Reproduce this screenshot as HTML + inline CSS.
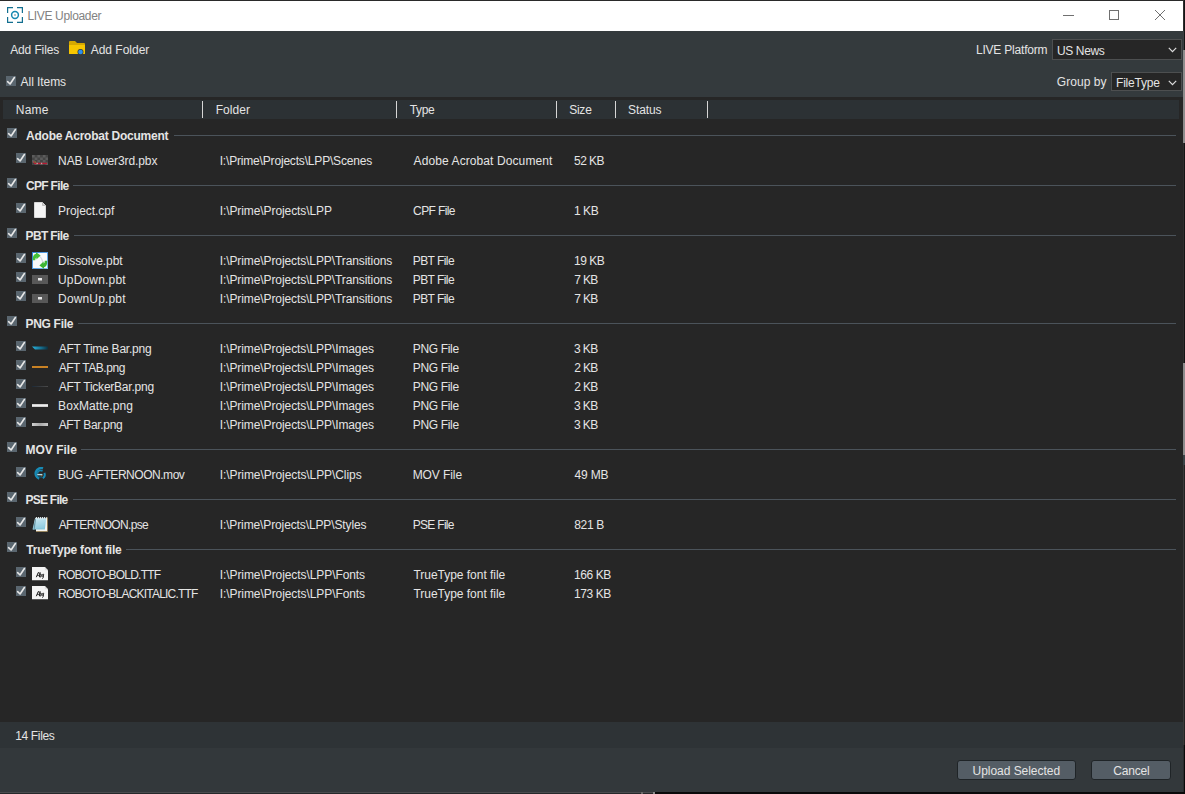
<!DOCTYPE html>
<html><head><meta charset="utf-8"><style>
html,body{margin:0;padding:0;width:1185px;height:794px;overflow:hidden;background:#262626;}
body{position:relative;font-family:"Liberation Sans", sans-serif;color:#e4e4e4;font-size:12px;}
.t{position:absolute;white-space:nowrap;line-height:14px;}
.r{position:absolute;}
.cb{position:absolute;width:10px;height:10px;background:#5a666f;}
.cb svg{position:absolute;left:0;top:0;}
</style></head><body>
<div class="r" style="left:0px;top:0px;width:1185px;height:1px;background:#2a2a2a;"></div>
<div class="r" style="left:0px;top:1px;width:1183px;height:30px;background:#ffffff;"></div>
<svg class="r" style="left:7px;top:7px" width="16" height="16" viewBox="0 0 16 16"><path d="M0.6 6 V0.6 H6 M10 0.6 H15.4 V6 M15.4 10 V15.4 H10 M6 15.4 H0.6 V10" fill="none" stroke="#136f90" stroke-width="1.2"/><circle cx="8" cy="8" r="3.4" fill="none" stroke="#1688b0" stroke-width="1.5"/><rect x="7.3" y="7.3" width="1.4" height="1.4" fill="#5d8d9c"/></svg>
<div id="t0" class="t" style="left:27.43px;top:9px;color:#828282;letter-spacing:-0.330px;">LIVE Uploader</div>
<div class="r" style="left:1063px;top:15px;width:11px;height:1px;background:#707070;"></div>
<div class="r" style="left:1109px;top:10px;width:8px;height:8px;border:1px solid #707070"></div>
<svg class="r" style="left:1154px;top:9px" width="12" height="12" viewBox="0 0 12 12"><path d="M1 1 L11 11 M11 1 L1 11" stroke="#707070" stroke-width="1"/></svg>
<div class="r" style="left:0px;top:31px;width:1183px;height:66px;background:#343a3d;"></div>
<div id="t1" class="t" style="left:10.19px;top:43px;letter-spacing:-0.123px;">Add Files</div>
<svg class="r" style="left:69px;top:41px" width="17" height="15" viewBox="0 0 17 15"><path d="M0 1 Q0 0 1 0 H6 L8 2 H15 Q16 2 16 3 V5 H0 Z" fill="#d6a800"/><path d="M0 4 H16 V12.5 Q16 13 15.5 13 H0.5 Q0 13 0 12.5 Z" fill="#f7c600"/><circle cx="11.5" cy="11" r="3" fill="#343a3d"/><circle cx="11.5" cy="11" r="2.3" fill="#2c8ff0"/></svg>
<div id="t2" class="t" style="left:90.63px;top:43px;letter-spacing:-0.000px;">Add Folder</div>
<div id="t3" class="t" style="left:975.91px;top:43px;letter-spacing:-0.195px;">LIVE Platform</div>
<div class="r" style="left:1052px;top:39px;width:130px;height:21px;background:#262626;box-sizing:border-box;border:1px solid #4d4f50;"></div>
<div id="t4" class="t" style="left:1057.03px;top:44px;letter-spacing:-0.382px;">US News</div>
<svg class="r" style="left:1168px;top:47px" width="9" height="6" viewBox="0 0 9 6"><path d="M0.8 0.8 L4.5 4.6 L8.2 0.8" fill="none" stroke="#dddddd" stroke-width="1.2"/></svg>
<div class="cb" style="left:6px;top:76px"><svg width="10" height="10" viewBox="0 0 10 10"><path d="M1.6 5.7 L4.1 8.0 L8.4 1.5" fill="none" stroke="#e8e8e8" stroke-width="1.6" stroke-linecap="round" stroke-linejoin="round"/></svg></div>
<div id="t5" class="t" style="left:20.59px;top:75px;letter-spacing:-0.059px;">All Items</div>
<div id="t6" class="t" style="left:1056.79px;top:75px;letter-spacing:0.056px;">Group by</div>
<div class="r" style="left:1111px;top:72px;width:71px;height:19px;background:#262626;box-sizing:border-box;border:1px solid #4d4f50;"></div>
<div id="t7" class="t" style="left:1116.07px;top:76px;letter-spacing:-0.230px;">FileType</div>
<svg class="r" style="left:1168px;top:80px" width="9" height="6" viewBox="0 0 9 6"><path d="M0.8 0.8 L4.5 4.6 L8.2 0.8" fill="none" stroke="#dddddd" stroke-width="1.2"/></svg>
<div class="r" style="left:0px;top:97px;width:1183px;height:3px;background:#262626;"></div>
<div class="r" style="left:0px;top:100px;width:1183px;height:622px;background:#262626;"></div>
<div class="r" style="left:3px;top:100px;width:1176px;height:19px;background:#2c3134;"></div>
<div class="r" style="left:202px;top:101px;width:1px;height:17px;background:#d6d6d6;"></div>
<div class="r" style="left:396px;top:101px;width:1px;height:17px;background:#d6d6d6;"></div>
<div class="r" style="left:556px;top:101px;width:1px;height:17px;background:#d6d6d6;"></div>
<div class="r" style="left:615px;top:101px;width:1px;height:17px;background:#d6d6d6;"></div>
<div class="r" style="left:707px;top:101px;width:1px;height:17px;background:#d6d6d6;"></div>
<div id="t8" class="t" style="left:15.73px;top:103px;letter-spacing:0.254px;">Name</div>
<div id="t9" class="t" style="left:215.74px;top:103px;letter-spacing:0.056px;">Folder</div>
<div id="t10" class="t" style="left:409.75px;top:103px;letter-spacing:-0.325px;">Type</div>
<div id="t11" class="t" style="left:569.19px;top:103px;letter-spacing:-0.244px;">Size</div>
<div id="t12" class="t" style="left:628.00px;top:103px;letter-spacing:-0.093px;">Status</div>
<div class="cb" style="left:7px;top:128px"><svg width="10" height="10" viewBox="0 0 10 10"><path d="M1.6 5.7 L4.1 8.0 L8.4 1.5" fill="none" stroke="#e8e8e8" stroke-width="1.6" stroke-linecap="round" stroke-linejoin="round"/></svg></div>
<div id="t13" class="t" style="left:26.04px;top:129px;font-weight:700;letter-spacing:-0.243px;">Adobe Acrobat Document</div>
<div class="r" style="left:174px;top:135px;width:1002px;height:1px;background:#4b535a;"></div>
<div class="cb" style="left:16px;top:153px"><svg width="10" height="10" viewBox="0 0 10 10"><path d="M1.6 5.7 L4.1 8.0 L8.4 1.5" fill="none" stroke="#e8e8e8" stroke-width="1.6" stroke-linecap="round" stroke-linejoin="round"/></svg></div>
<svg class="r" style="left:32px;top:155px" width="16" height="10" viewBox="0 0 16 10"><rect width="16" height="10" fill="#444"/><rect x="0.00" y="0.00" width="2.7" height="2.5" fill="#5c5c5c"/><rect x="5.40" y="0.00" width="2.7" height="2.5" fill="#5c5c5c"/><rect x="10.80" y="0.00" width="2.7" height="2.5" fill="#5c5c5c"/><rect x="2.70" y="2.50" width="2.7" height="2.5" fill="#5c5c5c"/><rect x="8.10" y="2.50" width="2.7" height="2.5" fill="#5c5c5c"/><rect x="13.50" y="2.50" width="2.7" height="2.5" fill="#5c5c5c"/><rect x="0.00" y="5.00" width="2.7" height="2.5" fill="#5c5c5c"/><rect x="5.40" y="5.00" width="2.7" height="2.5" fill="#5c5c5c"/><rect x="10.80" y="5.00" width="2.7" height="2.5" fill="#5c5c5c"/><rect x="2.70" y="7.50" width="2.7" height="2.5" fill="#5c5c5c"/><rect x="8.10" y="7.50" width="2.7" height="2.5" fill="#5c5c5c"/><rect x="13.50" y="7.50" width="2.7" height="2.5" fill="#5c5c5c"/><rect x="2" y="7.8" width="13" height="1.3" fill="#b81a32"/><rect x="4.5" y="7.8" width="1.3" height="1.3" fill="#c8a8a8"/><rect x="9" y="7.8" width="1.2" height="1.3" fill="#c0a0a0"/><rect x="1" y="6.5" width="1.2" height="1.2" fill="#c83040"/><rect x="2.5" y="6.5" width="1.5" height="1" fill="#a08020"/></svg>
<div id="t14" class="t" style="left:58.07px;top:154px;letter-spacing:-0.089px;">NAB Lower3rd.pbx</div>
<div id="t15" class="t" style="left:219.73px;top:154px;letter-spacing:-0.181px;">I:\Prime\Projects\LPP\Scenes</div>
<div id="t16" class="t" style="left:413.59px;top:154px;letter-spacing:0.096px;">Adobe Acrobat Document</div>
<div id="t17" class="t" style="left:574.06px;top:154px;letter-spacing:-0.561px;">52 KB</div>
<div class="cb" style="left:7px;top:178px"><svg width="10" height="10" viewBox="0 0 10 10"><path d="M1.6 5.7 L4.1 8.0 L8.4 1.5" fill="none" stroke="#e8e8e8" stroke-width="1.6" stroke-linecap="round" stroke-linejoin="round"/></svg></div>
<div id="t18" class="t" style="left:26.00px;top:179px;font-weight:700;letter-spacing:-0.682px;">CPF File</div>
<div class="r" style="left:73px;top:185px;width:1103px;height:1px;background:#4b535a;"></div>
<div class="cb" style="left:16px;top:203px"><svg width="10" height="10" viewBox="0 0 10 10"><path d="M1.6 5.7 L4.1 8.0 L8.4 1.5" fill="none" stroke="#e8e8e8" stroke-width="1.6" stroke-linecap="round" stroke-linejoin="round"/></svg></div>
<svg class="r" style="left:34px;top:202px" width="12" height="16" viewBox="0 0 12 16"><path d="M0.5 0.5 H8.5 L11.5 3.5 V15.5 H0.5 Z" fill="#f4f4f4" stroke="#d8d8d8" stroke-width="1"/><path d="M8.5 0.5 V3.5 H11.5" fill="#cfcfcf" stroke="#bbbbbb" stroke-width="1"/></svg>
<div id="t19" class="t" style="left:58.07px;top:204px;letter-spacing:-0.050px;">Project.cpf</div>
<div id="t20" class="t" style="left:219.73px;top:204px;letter-spacing:-0.091px;">I:\Prime\Projects\LPP</div>
<div id="t21" class="t" style="left:413.12px;top:204px;letter-spacing:-0.612px;">CPF File</div>
<div id="t22" class="t" style="left:573.93px;top:204px;letter-spacing:-0.430px;">1 KB</div>
<div class="cb" style="left:7px;top:228px"><svg width="10" height="10" viewBox="0 0 10 10"><path d="M1.6 5.7 L4.1 8.0 L8.4 1.5" fill="none" stroke="#e8e8e8" stroke-width="1.6" stroke-linecap="round" stroke-linejoin="round"/></svg></div>
<div id="t23" class="t" style="left:25.53px;top:229px;font-weight:700;letter-spacing:-0.632px;">PBT File</div>
<div class="r" style="left:74px;top:235px;width:1102px;height:1px;background:#4b535a;"></div>
<div class="cb" style="left:16px;top:253px"><svg width="10" height="10" viewBox="0 0 10 10"><path d="M1.6 5.7 L4.1 8.0 L8.4 1.5" fill="none" stroke="#e8e8e8" stroke-width="1.6" stroke-linecap="round" stroke-linejoin="round"/></svg></div>
<svg class="r" style="left:32px;top:252px" width="16" height="17" viewBox="0 0 16 17"><defs><linearGradient id="db" x1="0" y1="0" x2="1" y2="1"><stop offset="0" stop-color="#2f7fd6"/><stop offset="1" stop-color="#7fc0f0"/></linearGradient></defs><rect x="0" y="0" width="16" height="17" fill="url(#db)"/><rect x="1" y="1" width="14" height="15" fill="#f8fafc"/><path d="M5.5 3 Q10 5 11 11" fill="none" stroke="#d4d8e0" stroke-width="1.2"/><path d="M0.8 8.2 Q0.4 2.6 4 1.8 L3.8 0 L8.6 3.4 L4.4 7.6 L4.4 5.4 Q3.2 5.8 3.2 8.2 Z" fill="#44c238"/><path d="M15.2 8.8 Q15.6 14.4 12 15.2 L12.2 17 L7.4 13.6 L11.6 9.4 L11.6 11.6 Q12.8 11.2 12.8 8.8 Z" fill="#3db534"/></svg>
<div id="t24" class="t" style="left:58.07px;top:254px;letter-spacing:-0.070px;">Dissolve.pbt</div>
<div id="t25" class="t" style="left:219.73px;top:254px;letter-spacing:-0.095px;">I:\Prime\Projects\LPP\Transitions</div>
<div id="t26" class="t" style="left:412.71px;top:254px;letter-spacing:-0.551px;">PBT File</div>
<div id="t27" class="t" style="left:573.93px;top:254px;letter-spacing:-0.459px;">19 KB</div>
<div class="cb" style="left:16px;top:272px"><svg width="10" height="10" viewBox="0 0 10 10"><path d="M1.6 5.7 L4.1 8.0 L8.4 1.5" fill="none" stroke="#e8e8e8" stroke-width="1.6" stroke-linecap="round" stroke-linejoin="round"/></svg></div>
<div class="r" style="left:32px;top:275px;width:16px;height:9px;background:#585858;"></div>
<div class="r" style="left:38px;top:278px;width:4px;height:2px;background:#e8e8e8;"></div>
<div class="r" style="left:38px;top:280px;width:4px;height:1px;background:#a0a0a0;"></div>
<div id="t28" class="t" style="left:57.92px;top:273px;letter-spacing:0.190px;">UpDown.pbt</div>
<div id="t29" class="t" style="left:219.73px;top:273px;letter-spacing:-0.095px;">I:\Prime\Projects\LPP\Transitions</div>
<div id="t30" class="t" style="left:412.71px;top:273px;letter-spacing:-0.551px;">PBT File</div>
<div id="t31" class="t" style="left:574.27px;top:273px;letter-spacing:-0.671px;">7 KB</div>
<div class="cb" style="left:16px;top:291px"><svg width="10" height="10" viewBox="0 0 10 10"><path d="M1.6 5.7 L4.1 8.0 L8.4 1.5" fill="none" stroke="#e8e8e8" stroke-width="1.6" stroke-linecap="round" stroke-linejoin="round"/></svg></div>
<div class="r" style="left:32px;top:294px;width:16px;height:9px;background:#585858;"></div>
<div class="r" style="left:38px;top:297px;width:4px;height:2px;background:#e8e8e8;"></div>
<div class="r" style="left:38px;top:299px;width:4px;height:1px;background:#a0a0a0;"></div>
<div id="t32" class="t" style="left:58.07px;top:292px;letter-spacing:0.157px;">DownUp.pbt</div>
<div id="t33" class="t" style="left:219.73px;top:292px;letter-spacing:-0.095px;">I:\Prime\Projects\LPP\Transitions</div>
<div id="t34" class="t" style="left:412.71px;top:292px;letter-spacing:-0.551px;">PBT File</div>
<div id="t35" class="t" style="left:574.27px;top:292px;letter-spacing:-0.671px;">7 KB</div>
<div class="cb" style="left:7px;top:316px"><svg width="10" height="10" viewBox="0 0 10 10"><path d="M1.6 5.7 L4.1 8.0 L8.4 1.5" fill="none" stroke="#e8e8e8" stroke-width="1.6" stroke-linecap="round" stroke-linejoin="round"/></svg></div>
<div id="t36" class="t" style="left:25.53px;top:317px;font-weight:700;letter-spacing:-0.311px;">PNG File</div>
<div class="r" style="left:78px;top:323px;width:1098px;height:1px;background:#4b535a;"></div>
<div class="cb" style="left:16px;top:341px"><svg width="10" height="10" viewBox="0 0 10 10"><path d="M1.6 5.7 L4.1 8.0 L8.4 1.5" fill="none" stroke="#e8e8e8" stroke-width="1.6" stroke-linecap="round" stroke-linejoin="round"/></svg></div>
<svg class="r" style="left:32px;top:346px" width="16" height="4" viewBox="0 0 16 4"><defs><linearGradient id="tb" x1="0" x2="1"><stop offset="0" stop-color="#29b6e0"/><stop offset="0.6" stop-color="#146a8a"/><stop offset="1" stop-color="#0d2f3d"/></linearGradient></defs><path d="M0 0.5 H16 V3.5 H3 Z" fill="url(#tb)"/></svg>
<div id="t37" class="t" style="left:58.63px;top:342px;letter-spacing:-0.237px;">AFT Time Bar.png</div>
<div id="t38" class="t" style="left:219.73px;top:342px;letter-spacing:-0.089px;">I:\Prime\Projects\LPP\Images</div>
<div id="t39" class="t" style="left:412.71px;top:342px;letter-spacing:-0.321px;">PNG File</div>
<div id="t40" class="t" style="left:574.09px;top:342px;letter-spacing:-0.610px;">3 KB</div>
<div class="cb" style="left:16px;top:360px"><svg width="10" height="10" viewBox="0 0 10 10"><path d="M1.6 5.7 L4.1 8.0 L8.4 1.5" fill="none" stroke="#e8e8e8" stroke-width="1.6" stroke-linecap="round" stroke-linejoin="round"/></svg></div>
<div class="r" style="left:32px;top:366px;width:16px;height:2px;background:#c98224;"></div>
<div id="t41" class="t" style="left:58.63px;top:361px;letter-spacing:-0.468px;">AFT TAB.png</div>
<div id="t42" class="t" style="left:219.73px;top:361px;letter-spacing:-0.089px;">I:\Prime\Projects\LPP\Images</div>
<div id="t43" class="t" style="left:412.71px;top:361px;letter-spacing:-0.321px;">PNG File</div>
<div id="t44" class="t" style="left:574.23px;top:361px;letter-spacing:-0.658px;">2 KB</div>
<div class="cb" style="left:16px;top:379px"><svg width="10" height="10" viewBox="0 0 10 10"><path d="M1.6 5.7 L4.1 8.0 L8.4 1.5" fill="none" stroke="#e8e8e8" stroke-width="1.6" stroke-linecap="round" stroke-linejoin="round"/></svg></div>
<div class="r" style="left:32px;top:386px;width:16px;height:1px;background:linear-gradient(90deg,#1c2a38,#3a3d40 60%,#4a4a4a);"></div>
<div id="t45" class="t" style="left:58.63px;top:380px;letter-spacing:-0.233px;">AFT TickerBar.png</div>
<div id="t46" class="t" style="left:219.73px;top:380px;letter-spacing:-0.089px;">I:\Prime\Projects\LPP\Images</div>
<div id="t47" class="t" style="left:412.71px;top:380px;letter-spacing:-0.321px;">PNG File</div>
<div id="t48" class="t" style="left:574.23px;top:380px;letter-spacing:-0.658px;">2 KB</div>
<div class="cb" style="left:16px;top:398px"><svg width="10" height="10" viewBox="0 0 10 10"><path d="M1.6 5.7 L4.1 8.0 L8.4 1.5" fill="none" stroke="#e8e8e8" stroke-width="1.6" stroke-linecap="round" stroke-linejoin="round"/></svg></div>
<div class="r" style="left:32px;top:404px;width:16px;height:3px;background:linear-gradient(#bdbdbd,#ececec 40%,#ececec 60%,#bdbdbd);"></div>
<div id="t49" class="t" style="left:58.07px;top:399px;letter-spacing:0.076px;">BoxMatte.png</div>
<div id="t50" class="t" style="left:219.73px;top:399px;letter-spacing:-0.089px;">I:\Prime\Projects\LPP\Images</div>
<div id="t51" class="t" style="left:412.71px;top:399px;letter-spacing:-0.321px;">PNG File</div>
<div id="t52" class="t" style="left:574.09px;top:399px;letter-spacing:-0.610px;">3 KB</div>
<div class="cb" style="left:16px;top:417px"><svg width="10" height="10" viewBox="0 0 10 10"><path d="M1.6 5.7 L4.1 8.0 L8.4 1.5" fill="none" stroke="#e8e8e8" stroke-width="1.6" stroke-linecap="round" stroke-linejoin="round"/></svg></div>
<div class="r" style="left:32px;top:423px;width:16px;height:3px;background:linear-gradient(90deg,#cfcfcf,#a8a8a8 50%,#c8c8c8);"></div>
<div id="t53" class="t" style="left:58.63px;top:418px;letter-spacing:-0.304px;">AFT Bar.png</div>
<div id="t54" class="t" style="left:219.73px;top:418px;letter-spacing:-0.089px;">I:\Prime\Projects\LPP\Images</div>
<div id="t55" class="t" style="left:412.71px;top:418px;letter-spacing:-0.321px;">PNG File</div>
<div id="t56" class="t" style="left:574.09px;top:418px;letter-spacing:-0.610px;">3 KB</div>
<div class="cb" style="left:7px;top:442px"><svg width="10" height="10" viewBox="0 0 10 10"><path d="M1.6 5.7 L4.1 8.0 L8.4 1.5" fill="none" stroke="#e8e8e8" stroke-width="1.6" stroke-linecap="round" stroke-linejoin="round"/></svg></div>
<div id="t57" class="t" style="left:25.53px;top:443px;font-weight:700;letter-spacing:0.003px;">MOV File</div>
<div class="r" style="left:81px;top:449px;width:1095px;height:1px;background:#4b535a;"></div>
<div class="cb" style="left:16px;top:467px"><svg width="10" height="10" viewBox="0 0 10 10"><path d="M1.6 5.7 L4.1 8.0 L8.4 1.5" fill="none" stroke="#e8e8e8" stroke-width="1.6" stroke-linecap="round" stroke-linejoin="round"/></svg></div>
<svg class="r" style="left:33px;top:467px" width="14" height="13" viewBox="0 0 14 13"><path d="M10 1.4 A5.3 5.3 0 1 0 6.2 11.6" fill="none" stroke="#178bb6" stroke-width="2.4"/><path d="M9.6 4.2 A3.2 3.2 0 0 0 4.4 6.8" fill="none" stroke="#1783ab" stroke-width="1.6"/><path d="M11.4 5.8 A4.6 4.6 0 0 1 9.8 11.2" fill="none" stroke="#178bb6" stroke-width="2"/><path d="M5.2 9.2 Q7 10.6 9 9.8" fill="none" stroke="#0f5570" stroke-width="1.4"/><path d="M4.2 7.6 H9.4" stroke="#a8dcee" stroke-width="1.4"/><rect x="7.8" y="8.4" width="1.6" height="0.8" fill="#c08a40"/></svg>
<div id="t58" class="t" style="left:58.07px;top:468px;letter-spacing:-0.464px;">BUG -AFTERNOON.mov</div>
<div id="t59" class="t" style="left:219.73px;top:468px;letter-spacing:-0.082px;">I:\Prime\Projects\LPP\Clips</div>
<div id="t60" class="t" style="left:412.71px;top:468px;letter-spacing:-0.089px;">MOV File</div>
<div id="t61" class="t" style="left:574.57px;top:468px;letter-spacing:-0.188px;">49 MB</div>
<div class="cb" style="left:7px;top:492px"><svg width="10" height="10" viewBox="0 0 10 10"><path d="M1.6 5.7 L4.1 8.0 L8.4 1.5" fill="none" stroke="#e8e8e8" stroke-width="1.6" stroke-linecap="round" stroke-linejoin="round"/></svg></div>
<div id="t62" class="t" style="left:25.53px;top:493px;font-weight:700;letter-spacing:-0.757px;">PSE File</div>
<div class="r" style="left:73px;top:499px;width:1103px;height:1px;background:#4b535a;"></div>
<div class="cb" style="left:16px;top:517px"><svg width="10" height="10" viewBox="0 0 10 10"><path d="M1.6 5.7 L4.1 8.0 L8.4 1.5" fill="none" stroke="#e8e8e8" stroke-width="1.6" stroke-linecap="round" stroke-linejoin="round"/></svg></div>
<svg class="r" style="left:32px;top:516px" width="16" height="16" viewBox="0 0 16 16"><defs><linearGradient id="pg" x1="0" y1="0" x2="0.3" y2="1"><stop offset="0" stop-color="#dff3f9"/><stop offset="1" stop-color="#88c8dc"/></linearGradient><linearGradient id="pl" x1="0" y1="0" x2="1" y2="0"><stop offset="0" stop-color="#8fc4d6"/><stop offset="0.6" stop-color="#5a8898"/><stop offset="1" stop-color="#bfe4ef"/></linearGradient></defs><path d="M4 1.4 H15.2 V15.4 H4 Z" fill="#f6f4ee"/><path d="M15 1.6 H15.8 V15.8 H4 V15 H15 Z" fill="#a48a5a"/><path d="M3.3 1.1 H14.4 L12.9 13.5 H0.5 Z" fill="url(#pg)"/><path d="M3.2 3 L1 13.6 H2.6 L4.4 3 Z" fill="url(#pl)"/><path d="M3.3 1.1 H14.4 V2.4 H3.1 Z" fill="#eef8fb"/><rect x="3.2" y="0" width="0.9" height="2.2" fill="#1e1e1e"/><rect x="5.2" y="0" width="0.9" height="2.2" fill="#1e1e1e"/><rect x="7.2" y="0" width="0.9" height="2.2" fill="#1e1e1e"/><rect x="9.2" y="0" width="0.9" height="2.2" fill="#1e1e1e"/><rect x="11.2" y="0" width="0.9" height="2.2" fill="#1e1e1e"/><rect x="13.2" y="0" width="0.9" height="2.2" fill="#1e1e1e"/><path d="M4.5 5 H13 M4.2 7 H12.8 M4 9 H12.5 M3.8 11 H12.3" stroke="#a8d6e4" stroke-width="0.5"/></svg>
<div id="t63" class="t" style="left:58.63px;top:518px;letter-spacing:-0.660px;">AFTERNOON.pse</div>
<div id="t64" class="t" style="left:219.73px;top:518px;letter-spacing:-0.122px;">I:\Prime\Projects\LPP\Styles</div>
<div id="t65" class="t" style="left:412.71px;top:518px;letter-spacing:-0.696px;">PSE File</div>
<div id="t66" class="t" style="left:574.13px;top:518px;letter-spacing:-0.286px;">821 B</div>
<div class="cb" style="left:7px;top:542px"><svg width="10" height="10" viewBox="0 0 10 10"><path d="M1.6 5.7 L4.1 8.0 L8.4 1.5" fill="none" stroke="#e8e8e8" stroke-width="1.6" stroke-linecap="round" stroke-linejoin="round"/></svg></div>
<div id="t67" class="t" style="left:26.29px;top:543px;font-weight:700;letter-spacing:-0.219px;">TrueType font file</div>
<div class="r" style="left:126px;top:549px;width:1050px;height:1px;background:#4b535a;"></div>
<div class="cb" style="left:16px;top:567px"><svg width="10" height="10" viewBox="0 0 10 10"><path d="M1.6 5.7 L4.1 8.0 L8.4 1.5" fill="none" stroke="#e8e8e8" stroke-width="1.6" stroke-linecap="round" stroke-linejoin="round"/></svg></div>
<svg class="r" style="left:32px;top:567px" width="16" height="14" viewBox="0 0 16 14"><path d="M0 0 H12.8 L16 3.2 V13.3 H0 Z" fill="#f4f4f4"/><path d="M12.8 0 L16 3.2 H12.8 Z" fill="#dedede"/><path d="M4.3 10.2 L6.2 5.6 L7.2 5.6 L7.6 10.2" fill="none" stroke="#222" stroke-width="1"/><path d="M5 8.6 H7.3" stroke="#222" stroke-width="0.8"/><path d="M8.4 5.4 L7.9 10.1 M8.2 7.8 Q9.8 6.8 9.7 8.6 Q9.5 10.1 8.1 10" fill="none" stroke="#222" stroke-width="0.9"/><path d="M11.6 7.2 Q10.2 7 10.1 8.6 Q10.2 9.8 11.4 9.3 M11.7 7.1 L11.2 10.8 Q10.9 11.6 10 11.2" fill="none" stroke="#222" stroke-width="0.9"/></svg>
<div id="t68" class="t" style="left:58.07px;top:568px;letter-spacing:-0.769px;">ROBOTO-BOLD.TTF</div>
<div id="t69" class="t" style="left:219.73px;top:568px;letter-spacing:-0.076px;">I:\Prime\Projects\LPP\Fonts</div>
<div id="t70" class="t" style="left:413.45px;top:568px;letter-spacing:-0.026px;">TrueType font file</div>
<div id="t71" class="t" style="left:573.93px;top:568px;letter-spacing:-0.391px;">166 KB</div>
<div class="cb" style="left:16px;top:586px"><svg width="10" height="10" viewBox="0 0 10 10"><path d="M1.6 5.7 L4.1 8.0 L8.4 1.5" fill="none" stroke="#e8e8e8" stroke-width="1.6" stroke-linecap="round" stroke-linejoin="round"/></svg></div>
<svg class="r" style="left:32px;top:586px" width="16" height="14" viewBox="0 0 16 14"><path d="M0 0 H12.8 L16 3.2 V13.3 H0 Z" fill="#f4f4f4"/><path d="M12.8 0 L16 3.2 H12.8 Z" fill="#dedede"/><path d="M4.3 10.2 L6.2 5.6 L7.2 5.6 L7.6 10.2" fill="none" stroke="#222" stroke-width="1"/><path d="M5 8.6 H7.3" stroke="#222" stroke-width="0.8"/><path d="M8.4 5.4 L7.9 10.1 M8.2 7.8 Q9.8 6.8 9.7 8.6 Q9.5 10.1 8.1 10" fill="none" stroke="#222" stroke-width="0.9"/><path d="M11.6 7.2 Q10.2 7 10.1 8.6 Q10.2 9.8 11.4 9.3 M11.7 7.1 L11.2 10.8 Q10.9 11.6 10 11.2" fill="none" stroke="#222" stroke-width="0.9"/></svg>
<div id="t72" class="t" style="left:58.07px;top:587px;letter-spacing:-0.787px;">ROBOTO-BLACKITALIC.TTF</div>
<div id="t73" class="t" style="left:219.73px;top:587px;letter-spacing:-0.076px;">I:\Prime\Projects\LPP\Fonts</div>
<div id="t74" class="t" style="left:413.45px;top:587px;letter-spacing:-0.026px;">TrueType font file</div>
<div id="t75" class="t" style="left:573.93px;top:587px;letter-spacing:-0.391px;">173 KB</div>
<div class="r" style="left:0px;top:722px;width:1183px;height:26px;background:#2e3336;"></div>
<div id="t76" class="t" style="left:15.22px;top:729px;letter-spacing:-0.347px;">14 Files</div>
<div class="r" style="left:0px;top:748px;width:1183px;height:44px;background:#33383b;"></div>
<div class="r" style="left:0px;top:792px;width:1185px;height:2px;background:#0a0a0a;"></div>
<div class="r" style="left:0px;top:792px;width:655px;height:1px;background:#4a4b4e;"></div>
<div class="r" style="left:0px;top:793px;width:655px;height:1px;background:#26282a;"></div>
<div class="r" style="left:641px;top:792px;width:2px;height:2px;background:#6a6a6a;"></div>
<div class="r" style="left:653px;top:792px;width:2px;height:2px;background:#8a8a8a;"></div>
<div class="r" style="left:957px;top:760px;width:119px;height:20px;background:#545d65;box-sizing:border-box;border:1px solid #1f2427;border-radius:3px;"></div>
<div class="r" style="left:1091px;top:760px;width:80px;height:20px;background:#545d65;box-sizing:border-box;border:1px solid #1f2427;border-radius:3px;"></div>
<div id="t77" class="t" style="left:972.55px;top:764px;letter-spacing:-0.039px;">Upload Selected</div>
<div id="t78" class="t" style="left:1113.36px;top:764px;letter-spacing:-0.230px;">Cancel</div>
<div class="r" style="left:1183px;top:0px;width:1px;height:792px;background:#2e2e2e;"></div>
<div class="r" style="left:1184px;top:0px;width:1px;height:792px;background:#151515;"></div>
<div class="r" style="left:1183px;top:31px;width:1px;height:19px;background:#3a3f42;"></div>
<div class="r" style="left:1183px;top:50px;width:2px;height:93px;background:#8c8c8c;"></div>
<div class="r" style="left:1183px;top:363px;width:2px;height:92px;background:#8c8c8c;"></div>
<div class="r" style="left:1183px;top:455px;width:2px;height:10px;background:#3a4347;"></div>
<div class="r" style="left:1183px;top:465px;width:1px;height:280px;background:#3a3a3a;"></div>
<div class="r" style="left:1184px;top:465px;width:1px;height:280px;background:#222222;"></div>
<div class="r" style="left:1183px;top:745px;width:1px;height:47px;background:#2a2d2f;"></div>
<div class="r" style="left:1184px;top:745px;width:1px;height:47px;background:#0a0a0a;"></div>
</body></html>
